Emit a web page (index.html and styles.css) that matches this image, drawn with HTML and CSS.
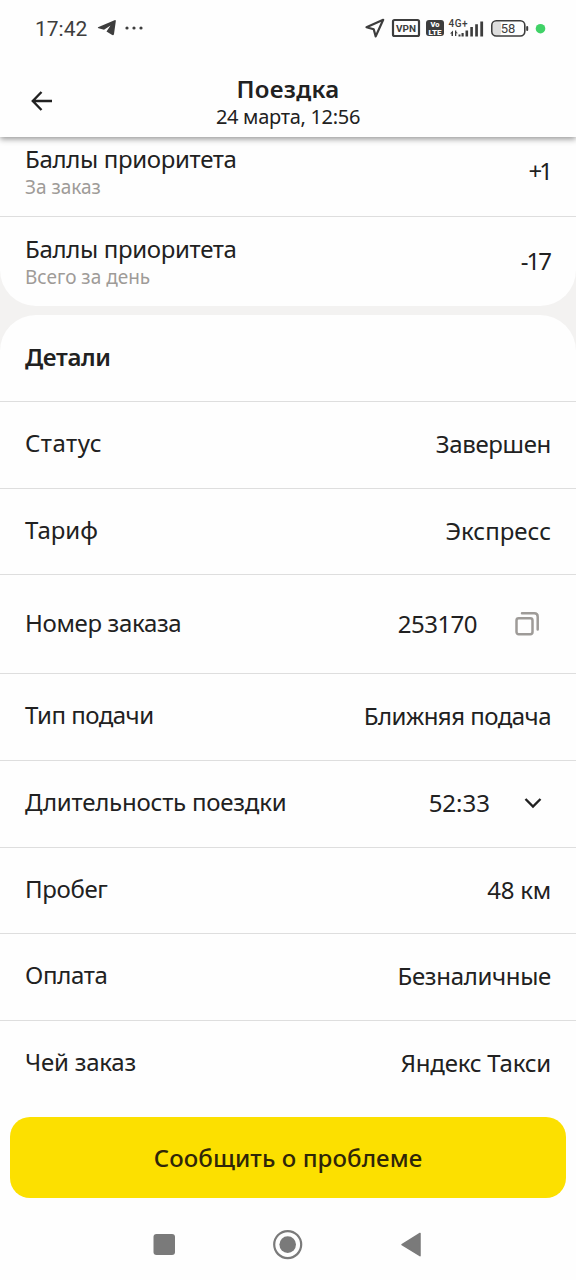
FILE: index.html
```html
<!DOCTYPE html>
<html lang="ru">
<head>
<meta charset="utf-8">
<title>Поездка</title>
<link rel="stylesheet" href="styles.css">
</head>
<body>
<div class="screen">
  <div class="status">
    <span class="clock">17:42</span>
    <svg class="telegram" width="20" height="18" viewBox="0 0 20 18"><path d="M1 8.200 17.500 1.200Q19 .8 18.800 2.200L17 15Q16.500 17 14.800 15.800L9.500 12.500 13.500 6.500 7 10.800 1.500 9.300Q.4 8.800 1 8.200Z"/></svg>
    <svg class="more" width="18" height="4" viewBox="0 0 18 4"><circle cx="2" cy="2" r="1.600"/><circle cx="9" cy="2" r="1.600"/><circle cx="16" cy="2" r="1.600"/></svg>
    <svg class="indicators" width="184" height="26" viewBox="0 0 184 26">
      <path class="stroke" d="M2.500 12.200 19.200 4.800 11.700 21.400 9.700 14.300Z"/>
      <rect class="stroke" x="29" y="5" width="26" height="16" rx="1.500"/>
      <text x="32" y="16.500" class="t-vpn" textLength="20" lengthAdjust="spacingAndGlyphs">VPN</text>
      <rect x="62" y="5" width="18" height="16" rx="3"/>
      <text x="66.500" y="12.300" class="t-volte" textLength="9" lengthAdjust="spacingAndGlyphs">Vo</text>
      <text x="64.500" y="19.500" class="t-volte" textLength="13" lengthAdjust="spacingAndGlyphs">LTE</text>
      <text x="84.500" y="12" class="t-net" textLength="19">4G+</text>
      <path d="M89 15.500v5.500h-1.500v-2.500H86ZM91 15.500h1.300v1.500L94 18.300H92.300V21H91ZM94.500 19.500h2v2h-2ZM97.500 18h2.200v3.500h-2.200ZM101.500 15.500h2.600v6h-2.600ZM106.300 12h2.600v9.500h-2.600ZM111.200 9.300h2.700v12.200h-2.700ZM116.300 6.500h2.800v15h-2.800Z"/>
      <rect x="129" y="6.500" width="8" height="14" rx="3" fill="#dedede"/>
      <rect class="thin" x="127.800" y="5.800" width="33" height="15.200" rx="4.500"/>
      <rect x="162.200" y="11" width="2" height="5" rx="1"/>
      <text x="144" y="18.200" text-anchor="middle" class="t-bat">58</text>
      <circle cx="176.500" cy="13.700" r="4.800" fill="#40d267"/>
    </svg>
  </div>

  <header class="header">
    <svg class="back" width="24" height="24" viewBox="0 0 24 24"><path d="M22 12H3M11.500 3 2.800 12l8.700 9"/></svg>
    <div class="title">Поездка</div>
    <div class="subtitle">24 марта, 12:56</div>
  </header>

  <main class="content">
    <section class="card card-top">
      <div class="row points first"><div><div class="label snug">Баллы приоритета</div><div class="hint">За заказ</div></div><span class="value plus">+1</span></div>
      <div class="row points"><div><div class="label snug">Баллы приоритета</div><div class="hint">Всего за день</div></div><span class="value minus">-17</span></div>
    </section>
    <section class="card details">
      <h2 class="heading">Детали</h2>
      <div class="row h87"><span class="label loose">Статус</span><span class="value snug">Завершен</span></div>
      <div class="row"><span class="label">Тариф</span><span class="value">Экспресс</span></div>
      <div class="row tall"><span class="label snug">Номер заказа</span><span class="value tight">253170</span>
        <svg class="copy" width="26" height="26" viewBox="0 0 26 26"><rect x="2.500" y="7.300" width="16" height="16" rx="2.200"/><path d="M8 2.300H20.300Q23.700 2.300 23.700 5.700V18.500"/></svg>
      </div>
      <div class="row h87"><span class="label tight">Тип подачи</span><span class="value tight">Ближняя подача</span></div>
      <div class="row h87"><span class="label close">Длительность поездки</span><span class="value">52:33</span>
        <svg class="chevron" width="18" height="12" viewBox="0 0 18 12"><path d="m1.500 2 7.500 7.500L16.500 2"/></svg>
      </div>
      <div class="row"><span class="label snug">Пробег</span><span class="value close">48 км</span></div>
      <div class="row h87"><span class="label snug">Оплата</span><span class="value snug">Безналичные</span></div>
      <div class="row"><span class="label close">Чей заказ</span><span class="value close">Яндекс Такси</span></div>
    </section>
  </main>

  <button class="report">Сообщить о проблеме</button>

  <nav class="nav">
    <svg width="270" height="32" viewBox="0 0 270 32"><rect x=".5" y="5" width="21.500" height="21" rx="3"/><circle cx="134.700" cy="15.600" r="13.500" class="ring"/><circle cx="134.700" cy="15.600" r="8.300"/><path class="triangle" d="M249 15.600 267 4.500V26.700Z"/></svg>
  </nav>
</div>
</body>
</html>
```
FILE: styles.css
```css
* { box-sizing: border-box; }
body { margin: 0; background: #fefefe; color: #212121; font-family: "Noto Sans", "Open Sans", sans-serif; }
.screen { width: 576px; height: 1280px; display: flex; flex-direction: column; overflow: hidden; background: #fefefe; }
svg { display: block; flex: none; overflow: visible; }

.status { height: 56px; flex: none; display: flex; align-items: center; padding: 0 28px 0 35px; fill: #3d3d3d; }
.clock { width: 53px; margin-right: 9px; padding-top: 2px; font: 400 21px/26px Roboto, sans-serif; color: #3d3d3d; }
.more { margin-left: 8px; }
.indicators { margin-left: auto; }
.stroke { fill: none; stroke: #3d3d3d; stroke-width: 2.2; stroke-linejoin: round; }
.thin { fill: none; stroke: #3d3d3d; stroke-width: 1.6; }
.t-vpn { font: 700 9.500px Roboto, sans-serif; }
.t-volte { font: 900 7.500px Roboto, sans-serif; fill: #fff; }
.t-net { font: 500 10px Roboto, sans-serif; }
.t-bat { font: 400 13px Roboto, sans-serif; }

.header { position: relative; z-index: 1; height: 81px; flex: none; padding-top: 17px; background: #fefefe; text-align: center; box-shadow: 0 2px 6px rgba(0, 0, 0, .42); clip-path: inset(0 0 -12px 0); }
.back { position: absolute; left: 30px; top: 33px; fill: none; stroke: #212121; stroke-width: 2.4; }
.title { font-size: 24px; font-weight: 600; line-height: 32px; letter-spacing: .3px; }
.subtitle { font-size: 20px; line-height: 23px; letter-spacing: -.3px; }

.content { flex: none; height: 970px; display: flex; flex-direction: column; gap: 9px; background: #f3f2f1; }
.card { background: #fefefe; }
.card-top { border-radius: 0 0 36px 36px; }
.details { flex: 1; border-radius: 36px 36px 0 0; }
.row { height: 86px; display: flex; align-items: center; padding: 0 25px 1px; border-top: 1px solid #dedede; font-size: 24px; line-height: 32px; }
.row.h87 { height: 87px; padding-bottom: 2px; }
.row.tall { height: 99px; }
.row.points { height: 90px; padding-bottom: 2px; }
.row.first { height: 79px; border-top: 0; padding-bottom: 11px; }
.label { position: relative; top: -1px; }
.points .label { top: 0; }
.value { margin-left: auto; }
.loose { letter-spacing: .5px; }
.close { letter-spacing: -.22px; }
.snug { letter-spacing: -.33px; }
.tight { letter-spacing: -.53px; }
.plus { letter-spacing: -3px; margin-right: 1px; }
.minus { letter-spacing: -2px; margin-right: 1px; }
.hint { font-size: 19px; line-height: 24px; color: #9e9b98; }
.heading { margin: 0; height: 86px; padding: 26px 25px 0; font-size: 24px; font-weight: 600; line-height: 32px; letter-spacing: -.35px; }
.copy { margin: 0 11px 0 37px; fill: none; stroke: #9e9b98; stroke-width: 2.500; stroke-linecap: round; }
.chevron { margin: 0 9px 0 34px; fill: none; stroke: #212121; stroke-width: 2.400; }

.report { flex: none; height: 81px; margin: 10px 10px 0; padding: 0; border: 0; border-radius: 20px; background: #fce000; color: #2f2608; font: 500 24px/32px "Noto Sans", "Open Sans", sans-serif; letter-spacing: .1px; }
.nav { flex: 1; padding: 31px 0 0 153px; fill: #7a7a7a; }
.ring { fill: none; stroke: #7a7a7a; stroke-width: 2.200; }
.triangle { stroke: #7a7a7a; stroke-width: 1.500; stroke-linejoin: round; }
```
